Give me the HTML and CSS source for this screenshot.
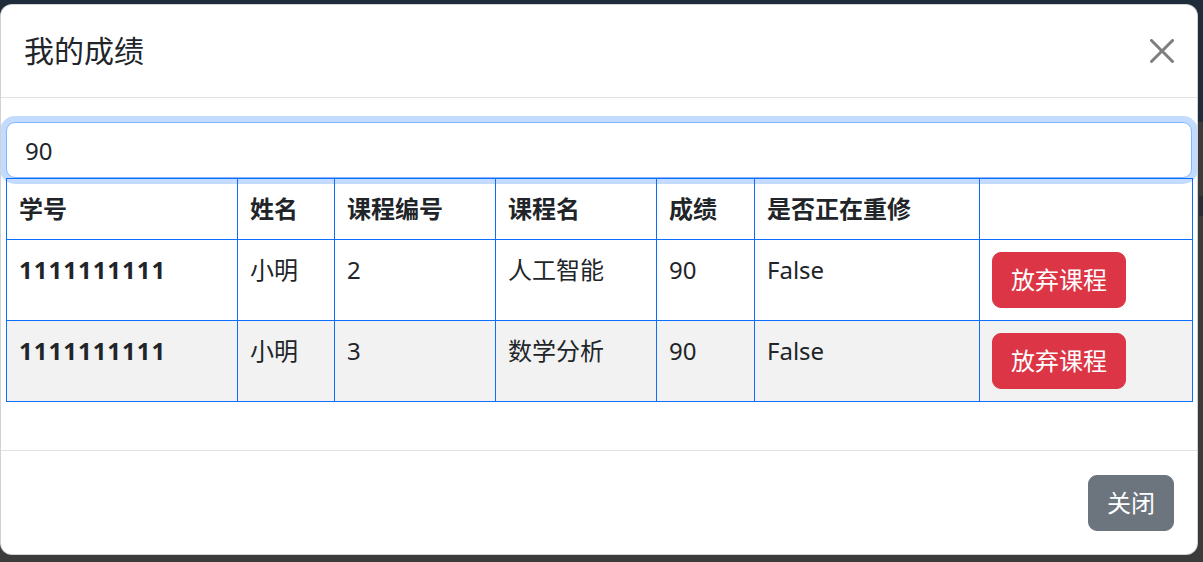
FILE: index.html
```html
<!DOCTYPE html>
<html lang="zh">
<head>
<meta charset="utf-8">
<title>我的成绩</title>
<link rel="stylesheet" href="styles.css">
</head>
<body>
<div class="backdrop-top"></div>
<div class="backdrop-mark"></div>
<div class="modal">
  <div class="modal-header">
    <h5 class="modal-title">我的成绩</h5>
    <button class="btn-close" aria-label="Close">
      <svg width="24" height="24" viewBox="0 0 16 16"><path d="M.293.293a1 1 0 0 1 1.414 0L8 6.586 14.293.293a1 1 0 1 1 1.414 1.414L9.414 8l6.293 6.293a1 1 0 0 1-1.414 1.414L8 9.414l-6.293 6.293a1 1 0 0 1-1.414-1.414L6.586 8 .293 1.707a1 1 0 0 1 0-1.414z"/></svg>
    </button>
  </div>
  <div class="modal-body">
    <input class="form-control" type="text" value="90">
    <table class="table">
      <colgroup>
        <col class="c1"><col class="c2"><col class="c3"><col class="c4"><col class="c5"><col class="c6"><col class="c7">
      </colgroup>
      <thead>
        <tr><th>学号</th><th>姓名</th><th>课程编号</th><th>课程名</th><th>成绩</th><th>是否正在重修</th><th></th></tr>
      </thead>
      <tbody>
        <tr><th class="sid">1111111111</th><td>小明</td><td>2</td><td>人工智能</td><td>90</td><td>False</td><td><button class="btn btn-danger">放弃课程</button></td></tr>
        <tr class="striped"><th class="sid">1111111111</th><td>小明</td><td>3</td><td>数学分析</td><td>90</td><td>False</td><td><button class="btn btn-danger">放弃课程</button></td></tr>
      </tbody>
    </table>
  </div>
  <div class="modal-footer">
    <button class="btn btn-secondary">关闭</button>
  </div>
</div>
</body>
</html>
```

FILE: styles.css
```css
* { box-sizing: border-box; }

html, body {
  margin: 0;
  height: 562px;
  overflow: hidden;
}

body {
  background: #3b3b3b;
  font-family: "Noto Sans", "Noto Sans CJK SC", sans-serif;
  font-size: 24px;
  line-height: 1.5;
  color: #212529;
  position: relative;
}

.backdrop-top {
  position: absolute;
  left: 0;
  top: 0;
  width: 1203px;
  height: 122px;
  background: #1f2c39;
}

.backdrop-mark {
  position: absolute;
  right: 0;
  top: 196px;
  width: 4px;
  height: 20px;
  background: #2a2d33;
}

.modal {
  position: relative;
  margin-top: 4px;
  width: 1198px;
  background: #fff;
  border: 1px solid rgba(0, 0, 0, 0.175);
  border-radius: 12px;
  overflow: hidden;
}

.modal-header {
  display: flex;
  align-items: center;
  justify-content: space-between;
  padding: 23px 23px 24px 23px;
  border-bottom: 1px solid #dee2e6;
}

.modal-title {
  margin: 0;
  font-size: 30px;
  line-height: 45px;
  font-weight: 400;
}

.btn-close {
  display: flex;
  padding: 0;
  margin-right: 0;
  border: 0;
  background: transparent;
  opacity: 0.5;
  width: 24px;
  height: 24px;
}

.btn-close svg { fill: #000; }

.modal-body {
  padding: 24px 5px 24px 5px;
}

.form-control {
  display: block;
  width: 100%;
  height: 56px;
  padding: 9px 18px;
  font-family: inherit;
  font-size: 24px;
  line-height: 36px;
  color: #212529;
  background: #fff;
  border: 1px solid #86b7fe;
  border-radius: 9px;
  box-shadow: 0 0 0 6px rgba(13, 110, 253, 0.25);
  outline: 0;
}

.table {
  width: 1186px;
  table-layout: fixed;
  border-collapse: collapse;
  margin: 0 0 24px 0;
  position: relative;
}

.c1 { width: 231px; }
.c2 { width: 97px; }
.c3 { width: 161px; }
.c4 { width: 161px; }
.c5 { width: 98px; }
.c6 { width: 225px; }
.c7 { width: 213px; }

.table th,
.table td {
  border: 1px solid #0d6efd;
  padding: 12px 12px;
  text-align: left;
  vertical-align: top;
  font-size: 24px;
  line-height: 36px;
}

.table th { font-weight: 700; }

.table th.sid { letter-spacing: 1px; }

.table tbody td { font-weight: 400; }

.table tr.striped th,
.table tr.striped td {
  background: #f2f2f2;
}

.btn {
  font-family: inherit;
  font-size: 24px;
  line-height: 36px;
  padding: 9px 18px;
  border: 1px solid transparent;
  border-radius: 9px;
  color: #fff;
  cursor: pointer;
}

.btn-danger {
  background: #dc3545;
  border-color: #dc3545;
}

.btn-secondary {
  background: #6c757d;
  border-color: #6c757d;
}

.modal-footer {
  display: flex;
  justify-content: flex-end;
  padding: 18px 17px 17px 18px;
  border-top: 1px solid #dee2e6;
}

.modal-footer .btn {
  margin: 6px;
}
```
